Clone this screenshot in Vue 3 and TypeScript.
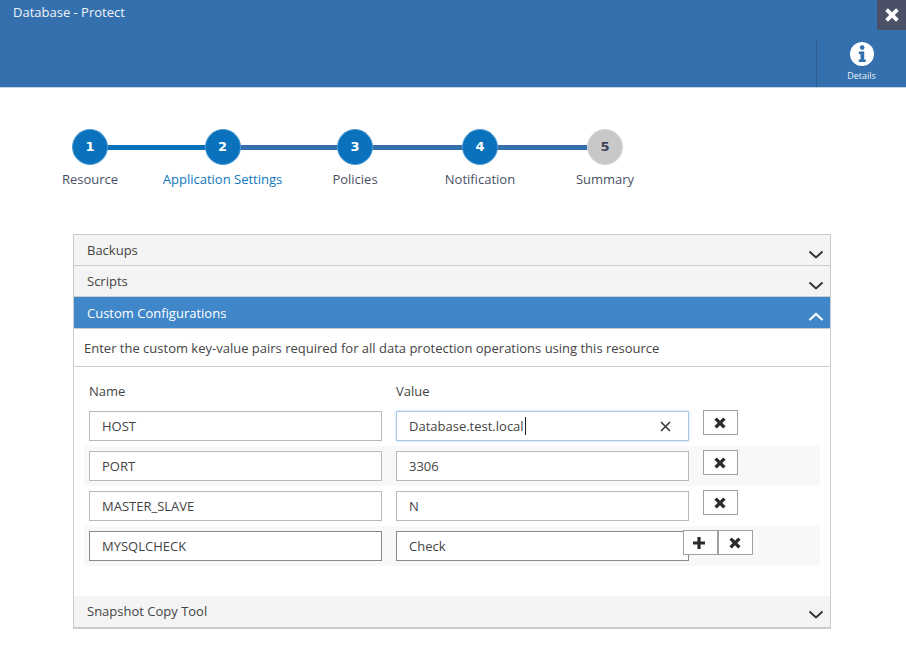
<script setup lang="ts">
interface Step { n: number; label: string; width: number; line: number; state: string; lineClass: string }
const steps: Step[] = [
  { n: 1, label: 'Resource', width: 120, line: 132.5, state: 'done', lineClass: 'line-active' },
  { n: 2, label: 'Application Settings', width: 145, line: 132.5, state: 'current', lineClass: '' },
  { n: 3, label: 'Policies', width: 120, line: 125, state: 'done', lineClass: '' },
  { n: 4, label: 'Notification', width: 130, line: 125, state: 'done', lineClass: '' },
  { n: 5, label: 'Summary', width: 120, line: 0, state: 'todo', lineClass: '' },
]
interface Row { name: string; value: string; focus?: boolean; last?: boolean }
const rows: Row[] = [
  { name: 'HOST', value: 'Database.test.local', focus: true },
  { name: 'PORT', value: '3306' },
  { name: 'MASTER_SLAVE', value: 'N' },
  { name: 'MYSQLCHECK', value: 'Check', last: true },
]
</script>

<template>
  <div class="page">
    <header class="top">
      <div class="title">Database - Protect</div>
      <button class="close" aria-label="Close">
        <svg width="16" height="16" viewBox="0 0 16 16"><path d="M2.6 2.6 13.4 13.4M13.4 2.6 2.6 13.4" stroke="#fff" stroke-width="3.8" fill="none" /></svg>
      </button>
      <div class="details">
        <svg width="24" height="24" viewBox="0 0 24 24">
          <circle cx="12" cy="12" r="12" fill="#fff" />
          <circle cx="12.2" cy="5.6" r="2.3" fill="#3570ae" />
          <path d="M8.8 9.6h5.4v8h1.6v2.3H8.8v-2.3h1.7v-5.7H8.8z" fill="#3570ae" />
        </svg>
        <span>Details</span>
      </div>
    </header>

    <nav class="stepper">
      <div v-for="s in steps" :key="s.n" class="step" :class="s.state" :style="{ width: s.width + 'px' }">
        <span v-if="s.line" class="line" :class="s.lineClass" :style="{ width: s.line + 'px' }"></span>
        <span class="dot">{{ s.n }}</span>
        <span class="label">{{ s.label }}</span>
      </div>
    </nav>

    <section class="accordion">
      <div class="head">
        <span>Backups</span>
        <svg class="chev" width="16" height="10" viewBox="0 0 16 10"><path d="M1.5 1.5 8 7.5l6.5-6" stroke="#333" stroke-width="2" fill="none" /></svg>
      </div>
      <div class="head">
        <span>Scripts</span>
        <svg class="chev" width="16" height="10" viewBox="0 0 16 10"><path d="M1.5 1.5 8 7.5l6.5-6" stroke="#333" stroke-width="2" fill="none" /></svg>
      </div>
      <div class="head open">
        <span>Custom Configurations</span>
        <svg class="chev" width="16" height="10" viewBox="0 0 16 10"><path d="M1.5 8 8 2l6.5 6" stroke="#fff" stroke-width="2.2" fill="none" /></svg>
      </div>
      <p class="desc">Enter the custom key-value pairs required for all data protection operations using this resource</p>
      <div class="body">
        <div class="cols">
          <span class="col-name">Name</span>
          <span>Value</span>
        </div>
        <div v-for="(r, i) in rows" :key="r.name" class="row" :class="{ alt: i % 2 === 1 }">
          <input class="field name" :class="{ dark: r.last }" :value="r.name" readonly />
          <div class="value-wrap">
            <input class="field value" :class="{ focus: r.focus, dark: r.last }" :value="r.value" readonly />
            <template v-if="r.focus">
              <span class="caret"></span>
              <svg class="clear" width="11" height="11" viewBox="0 0 11 11"><path d="M1 1l9 9M10 1l-9 9" stroke="#333" stroke-width="1.5" fill="none" /></svg>
            </template>
          </div>
          <div class="actions" :class="{ pull: r.last }">
            <button v-if="r.last" class="act add" aria-label="Add">
              <svg width="14" height="14" viewBox="0 0 14 14"><path d="M7 1v12M1 7h12" stroke="#2b2b2b" stroke-width="3.2" fill="none" /></svg>
            </button>
            <button class="act" aria-label="Remove">
              <svg width="12" height="12" viewBox="0 0 12 12"><path d="M1.6 1.6l8.8 8.8M10.4 1.6l-8.8 8.8" stroke="#2b2b2b" stroke-width="3.4" fill="none" /></svg>
            </button>
          </div>
        </div>
      </div>
      <div class="head foot">
        <span>Snapshot Copy Tool</span>
        <svg class="chev" width="16" height="10" viewBox="0 0 16 10"><path d="M1.5 1.5 8 7.5l6.5-6" stroke="#333" stroke-width="2" fill="none" /></svg>
      </div>
    </section>
  </div>
</template>

<style scoped>
.page {
  width: 906px;
  height: 652px;
  overflow: hidden;
  background: #fff;
  font-family: "Open Sans", "Liberation Sans", sans-serif;
  font-size: 13px;
  color: #444;
}
.top {
  position: relative;
  height: 87px;
  box-sizing: content-box;
  background: #3570ae;
  border-bottom: 1px solid #c5d5e6;
  color: #fff;
}
.title {
  padding: 3px 0 0 13px;
  line-height: 18px;
  color: #eef3f8;
}
.close {
  position: absolute;
  top: 0;
  right: 0;
  width: 29px;
  height: 30px;
  padding: 0;
  border: 0;
  background: #4a5068;
  display: flex;
  align-items: center;
  justify-content: center;
}
.details {
  position: absolute;
  left: 816px;
  top: 40px;
  width: 90px;
  height: 47px;
  box-sizing: border-box;
  border-left: 1px solid #2a5a8e;
  display: flex;
  flex-direction: column;
  align-items: center;
  font-size: 9px;
  line-height: 12px;
  padding-top: 2px;
  gap: 4px;
  color: #e6eef6;
}
.stepper {
  display: flex;
  padding: 41px 0 0 30px;
  height: 146px;
  box-sizing: border-box;
}
.step {
  position: relative;
  display: flex;
  flex-direction: column;
  align-items: center;
  flex: none;
}
.line {
  position: absolute;
  top: 16px;
  left: 50%;
  height: 5px;
  background: #3570ae;
}
.line-active {
  background: #0a71bd;
}
.dot {
  position: relative;
  width: 36px;
  height: 36px;
  box-sizing: border-box;
  border-radius: 50%;
  border: 1px solid #4f9bd3;
  background: #0a71bd;
  color: #fff;
  font-weight: 700;
  font-size: 13px;
  line-height: 34px;
  text-align: center;
  font-family: "DejaVu Sans", sans-serif;
}
.todo .dot {
  background: #c8c8c8;
  border-color: #d8d8d8;
  color: #3f4458;
}
.label {
  margin-top: 5px;
  line-height: 18px;
  white-space: nowrap;
  color: #4a5064;
}
.current .label {
  color: #0f78c0;
}
.accordion {
  margin: 0 0 0 73px;
  width: 758px;
  box-sizing: border-box;
  border: 1px solid #ccc;
  border-bottom-width: 2px;
}
.head {
  position: relative;
  height: 31px;
  box-sizing: border-box;
  padding: 6px 13px 0;
  line-height: 18px;
  background: #f4f4f4;
  border-bottom: 1px solid #ccc;
  color: #444;
}
.head.open {
  height: 32px;
  background: #3f87c9;
  color: #fff;
  padding-top: 7px;
}
.head.foot {
  border-bottom: 0;
}
.chev {
  position: absolute;
  right: 6px;
  top: 15px;
}
.head.foot .chev {
  top: 14px;
}
.desc {
  margin: 0;
  height: 38px;
  box-sizing: border-box;
  padding: 10px 10px 0;
  line-height: 18px;
  border-bottom: 1px solid #ccc;
  color: #444;
}
.body {
  height: 229px;
  box-sizing: border-box;
  padding: 15px 10px 0;
}
.cols {
  display: flex;
  height: 24px;
  line-height: 18px;
  padding-left: 5px;
}
.col-name {
  width: 307px;
}
.row {
  display: flex;
  height: 40px;
  padding: 5px 0 0 5px;
  box-sizing: border-box;
  width: 736px;
}
.row.alt {
  background: #f8f8f8;
}
.field {
  display: block;
  height: 30px;
  width: 293px;
  box-sizing: border-box;
  border: 1px solid #b9b9b9;
  background: #fff;
  padding: 0 12px;
  font: inherit;
  color: #444;
  outline: none;
}
.field.dark {
  border-color: #8a8a8a;
}
.field.focus {
  border-color: #a9c6e2;
  box-shadow: 0 0 3px #c6dcf0;
}
.value-wrap {
  position: relative;
  margin-left: 14px;
  flex: none;
}
.caret {
  position: absolute;
  left: 129px;
  top: 6px;
  width: 1px;
  height: 18px;
  background: #222;
}
.clear {
  position: absolute;
  left: 264px;
  top: 10px;
}
.actions {
  display: flex;
  margin-left: 14px;
  margin-top: -1px;
  height: 25px;
}
.actions.pull {
  margin-left: -6px;
  position: relative;
}
.act {
  width: 35px;
  height: 25px;
  padding: 0 1px 0 0;
  box-sizing: border-box;
  border: 1px solid #a0a0a0;
  background: #fff;
  display: flex;
  align-items: center;
  justify-content: center;
}
.act.add {
  padding-right: 3px;
}
</style>
